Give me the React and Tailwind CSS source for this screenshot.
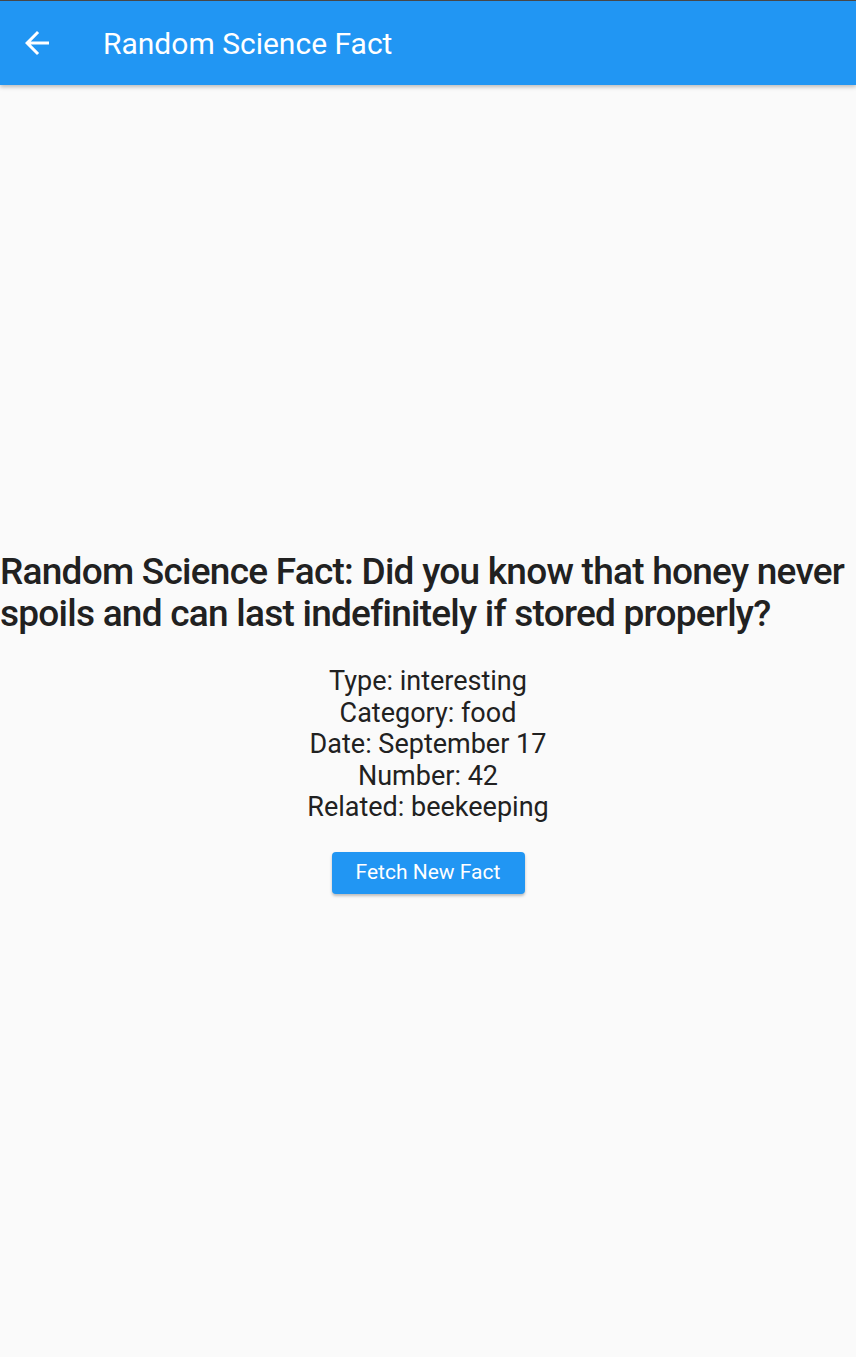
const details = [
  'Type: interesting',
  'Category: food',
  'Date: September 17',
  'Number: 42',
  'Related: beekeeping',
];

const App = () => {
  return (
    <div className="min-h-screen flex flex-col bg-[#fafafa] font-['Roboto',sans-serif]">
      <div className="h-px bg-[#4a4a4a]" />
      {/* App bar */}
      <header className="relative z-10 h-[84px] flex items-center bg-[#2196f3] text-white shadow-[0_2px_4px_rgba(0,0,0,0.25)]">
        <button className="w-[74px] h-full flex items-center pl-[19px]">
          <svg viewBox="0 0 24 24" className="w-[36px] h-[36px] fill-white">
            <path d="M20 11H7.83l5.59-5.59L12 4l-8 8 8 8 1.41-1.41L7.83 13H20v-2z" />
          </svg>
        </button>
        <h1 className="ml-[29px] text-[30px] font-normal">Random Science Fact</h1>
      </header>

      {/* Body */}
      <main className="flex-1 flex flex-col items-center justify-center pt-[3px]">
        <h2 className="w-full text-[37px] leading-[42px] font-medium text-[#212121] tracking-[-0.75px]">
          Random Science Fact: Did you know that honey never spoils and can last indefinitely if stored properly?
        </h2>
        <div className="mt-[31px] flex flex-col items-center text-[27px] leading-[31.5px] text-[#212121]">
          {details.map((d) => (
            <p key={d}>{d}</p>
          ))}
        </div>
        <button className="mt-[28px] w-[193px] h-[42px] rounded-[4px] bg-[#2196f3] text-white text-[21px] shadow-[0_2px_3px_rgba(0,0,0,0.25)]">
          Fetch New Fact
        </button>
      </main>
    </div>
  );
};

export default App;
